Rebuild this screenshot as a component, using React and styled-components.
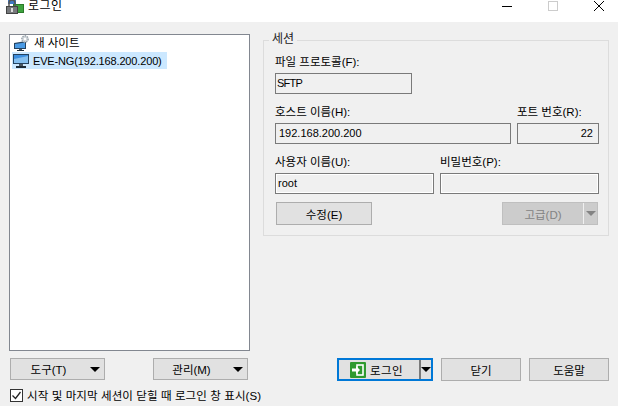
import styled, { createGlobalStyle } from "styled-components";

const GlobalStyle = createGlobalStyle`
  html, body {
    margin: 0;
    padding: 0;
    background: #f0f0f0;
  }
  body {
    font-family: "Liberation Sans", "Noto Sans CJK KR", sans-serif;
    font-size: 12px;
    color: #000;
  }
`;

const Window = styled.div`
  width: 618px;
  height: 406px;
  overflow: hidden;
  display: flex;
  flex-direction: column;
`;

const TitleBar = styled.div`
  height: 22px;
  background: #fff;
  display: flex;
  align-items: flex-start;
  flex: none;
  padding-left: 6px;
`;

const TitleIcon = styled.div`
  display: flex;
  flex: none;
`;

const TitleText = styled.span`
  margin-left: 4px;
  font-size: 12px;
  line-height: 13px;
  letter-spacing: 0.5px;
`;

const Controls = styled.div`
  margin-left: auto;
  margin-right: -4px;
  display: flex;
`;

const ControlButton = styled.div`
  width: 46px;
  height: 12px;
  display: flex;
  align-items: center;
  justify-content: center;
`;

const Main = styled.div`
  flex: 1;
  display: grid;
  grid-template-columns: 241px 346px;
  grid-template-rows: 318px 33px auto;
  column-gap: 13px;
  padding: 11px 0 0 9px;
`;

const SiteList = styled.div`
  margin-top: 1px;
  background: #fff;
  border: 1px solid #828790;
  box-sizing: border-box;
  padding: 0 0 0 2px;
`;

const SiteRow = styled.div`
  display: flex;
  align-items: center;
  gap: ${({ $selected }) => ($selected ? "4px" : "5px")};
  width: ${({ $selected }) => ($selected ? "155px" : "auto")};
  height: 17px;
  padding-left: 1px;
  box-sizing: border-box;
  background: ${({ $selected }) => ($selected ? "#cce8ff" : "transparent")};
  font-size: ${({ $selected }) => ($selected ? "11px" : "11.5px")};
  letter-spacing: ${({ $selected }) => ($selected ? "-0.15px" : "0")};
  white-space: nowrap;
`;

const SiteName = styled.span`
  padding-bottom: ${({ $raised }) => ($raised ? "3px" : "0")};
`;

const MonitorSvg = styled.svg`
  flex: none;
`;

const Session = styled.fieldset`
  margin: 0;
  min-width: 0;
  height: 203px;
  padding: 7px 9px 10px 11px;
  box-sizing: border-box;
  border: 1px solid #dcdcdc;
`;

const Legend = styled.legend`
  margin-left: -6px;
  padding: 0 3px;
  height: 14px;
  line-height: 12px;
  color: #222;
`;

const FieldRow = styled.div`
  display: grid;
  grid-template-columns: ${({ $columns }) => $columns};
  column-gap: 6px;
  margin-bottom: 10px;
`;

const Field = styled.div`
  display: flex;
  flex-direction: column;
`;

const Label = styled.label`
  height: 16px;
  line-height: 16px;
  margin-bottom: 3px;
  font-size: 11.5px;
  white-space: nowrap;
`;

const Input = styled.div`
  height: 21px;
  box-sizing: border-box;
  border: 1px solid #7a7a7a;
  background: #f0f0f0;
  line-height: 19px;
  padding: 0 ${({ $right }) => ($right ? "5px" : "2px")} 0 ${({ $indent }) => $indent || "1px"};
  text-align: ${({ $right }) => ($right ? "right" : "left")};
  font-size: 11px;
  letter-spacing: ${({ $spacing }) => $spacing || "0"};
  box-shadow: ${({ $inset }) => ($inset ? "inset 0 0 0 1px #fff" : "none")};
`;

const ActionRow = styled.div`
  display: flex;
  justify-content: space-between;
  margin: -2px 1px 0;
`;

const Button = styled.button`
  width: ${({ $width }) => $width || "96px"};
  height: ${({ $height }) => $height || "23px"};
  box-sizing: border-box;
  border: 1px solid ${({ disabled }) => (disabled ? "#bfbfbf" : "#adadad")};
  background: ${({ disabled }) => (disabled ? "#cccccc" : "#e1e1e1")};
  color: ${({ disabled }) => (disabled ? "#838383" : "#000")};
  padding: 0;
  font: inherit;
  font-size: 11.5px;
  display: flex;
  align-items: center;
  justify-content: center;
`;

const LeftButtons = styled.div`
  display: flex;
  justify-content: space-between;
  align-items: flex-start;
  padding: 7px 2px 0 1px;
`;

const RightButtons = styled.div`
  display: flex;
  align-items: flex-start;
  gap: 8px;
  padding: 7px 0 0 74px;
`;

const ButtonLabel = styled.span`
  flex: 1;
  text-align: center;
`;

const Arrow = styled.span`
  width: 0;
  height: 0;
  border-left: 5px solid transparent;
  border-right: 5px solid transparent;
  border-top: 5px solid ${({ $color }) => $color || "#000"};
`;

const ArrowSlot = styled.span`
  width: ${({ $width }) => $width || "18px"};
  height: 100%;
  display: flex;
  align-items: center;
  justify-content: center;
  flex: none;
`;

const Split = styled.span`
  width: ${({ $width }) => $width || "1px"};
  height: 100%;
  background: ${({ $color }) => $color};
  flex: none;
`;

const LoginButton = styled(Button)`
  border: 2px solid #0078d7;
`;

const LoginLabel = styled.span`
  flex: 1;
  display: flex;
  align-items: center;
  gap: 4px;
  padding-left: 11px;
  letter-spacing: 0.4px;
`;

const CheckRow = styled.div`
  grid-column: 1 / span 2;
  display: flex;
  align-items: center;
  gap: 4px;
  padding: 0 0 0 1px;
  font-size: 11.5px;
  letter-spacing: 0.1px;
  white-space: nowrap;
`;

const CheckBox = styled.span`
  width: 13px;
  height: 13px;
  box-sizing: border-box;
  border: 1px solid #333;
  background: #fff;
  display: flex;
  flex: none;
`;

function SiteMonitor() {
  return (
    <MonitorSvg width="16" height="17" viewBox="0 0 16 17">
      <rect x="0" y="2" width="16" height="10" fill="#24425f" />
      <rect x="1" y="3" width="14" height="8" fill="#3d8fe0" />
      <path d="M1 7 L15 4 V11 H1 Z" fill="#86c0f0" />
      <rect x="6" y="12" width="4" height="2" fill="#4a5560" />
      <rect x="3" y="14" width="10" height="2" fill="#1e2a36" />
    </MonitorSvg>
  );
}

function NewSiteMonitor() {
  return (
    <MonitorSvg width="16" height="17" viewBox="0 0 16 17">
      <path d="M1 8 L13 6 V14 H1 Z" fill="#24425f" />
      <path d="M2 9 L12 7.5 V13 H2 Z" fill="#4a9ae4" />
      <rect x="6" y="14" width="3" height="1" fill="#4a5560" />
      <rect x="4" y="15" width="7" height="1" fill="#1e2a36" />
      <circle cx="12" cy="4" r="3.2" fill="#cfd5da" stroke="#9aa3aa" strokeWidth="1.4" strokeDasharray="1.4 1" />
      <circle cx="12" cy="4" r="1.2" fill="#fff" />
    </MonitorSvg>
  );
}

function TitleGlyph() {
  return (
    <svg width="18" height="14" viewBox="0 0 18 14">
      <rect x="7.5" y="4.5" width="10" height="8" fill="#3ea33e" stroke="#2a7a2a" />
      <rect x="2" y="0" width="8" height="4" fill="#3f78c4" />
      <path d="M3 6 V3 a3 3 0 0 1 6 0 V6" fill="none" stroke="#555" strokeWidth="1.5" />
      <rect x="0.5" y="6.5" width="11" height="7" fill="#77797c" stroke="#444" />
      <rect x="5" y="8" width="2" height="4" fill="#ddd" />
    </svg>
  );
}

function LoginIcon() {
  return (
    <svg width="16" height="16" viewBox="0 0 16 16">
      <rect x="0" y="0" width="16" height="16" rx="1" fill="#2f9a2f" />
      <rect x="7" y="3" width="6" height="10" fill="none" stroke="#fff" strokeWidth="1.6" />
      <path d="M2 6.5 H6 V4 L10 8 L6 12 V9.5 H2 Z" fill="#fff" />
    </svg>
  );
}

export default function App() {
  return (
    <>
      <GlobalStyle />
      <Window>
        <TitleBar>
          <TitleIcon>
            <TitleGlyph />
          </TitleIcon>
          <TitleText>로그인</TitleText>
          <Controls>
            <ControlButton>
              <svg width="10" height="10" viewBox="0 0 10 10">
                <path d="M0 5.5 H10" stroke="#000" />
              </svg>
            </ControlButton>
            <ControlButton>
              <svg width="10" height="10" viewBox="0 0 10 10">
                <rect x="0.5" y="0.5" width="9" height="9" fill="none" stroke="#ccc" />
              </svg>
            </ControlButton>
            <ControlButton>
              <svg width="10" height="10" viewBox="0 0 10 10">
                <path d="M0 0 L10 10 M10 0 L0 10" stroke="#000" />
              </svg>
            </ControlButton>
          </Controls>
        </TitleBar>

        <Main>
          <SiteList>
            <SiteRow>
              <NewSiteMonitor />
              <SiteName $raised>새 사이트</SiteName>
            </SiteRow>
            <SiteRow $selected>
              <SiteMonitor />
              <SiteName>EVE-NG(192.168.200.200)</SiteName>
            </SiteRow>
          </SiteList>

          <Session>
            <Legend>세션</Legend>
            <FieldRow $columns="137px">
              <Field>
                <Label>파일 프로토콜(F):</Label>
                <Input $spacing="-0.8px">SFTP</Input>
              </Field>
            </FieldRow>
            <FieldRow $columns="236px 82px">
              <Field>
                <Label>호스트 이름(H):</Label>
                <Input $indent="3px">192.168.200.200</Input>
              </Field>
              <Field>
                <Label>포트 번호(R):</Label>
                <Input $right>22</Input>
              </Field>
            </FieldRow>
            <FieldRow $columns="159px 159px">
              <Field>
                <Label>사용자 이름(U):</Label>
                <Input $inset $indent="2px">root</Input>
              </Field>
              <Field>
                <Label>비밀번호(P):</Label>
                <Input $inset />
              </Field>
            </FieldRow>
            <ActionRow>
              <Button>수정(E)</Button>
              <Button disabled>
                <ButtonLabel>고급(D)</ButtonLabel>
                <Split $color="#f0f0f0" />
                <ArrowSlot $width="13px">
                  <Arrow $color="#838383" />
                </ArrowSlot>
              </Button>
            </ActionRow>
          </Session>

          <LeftButtons>
            <Button $width="95px" $height="22px">
              <ButtonLabel>도구(T)</ButtonLabel>
              <ArrowSlot>
                <Arrow />
              </ArrowSlot>
            </Button>
            <Button $width="95px" $height="22px">
              <ButtonLabel>관리(M)</ButtonLabel>
              <ArrowSlot>
                <Arrow />
              </ArrowSlot>
            </Button>
          </LeftButtons>

          <RightButtons>
            <LoginButton $width="96px">
              <LoginLabel>
                <LoginIcon />
                로그인
              </LoginLabel>
              <Split $color="#7a7a7a" $width="2px" />
              <ArrowSlot $width="10px">
                <Arrow />
              </ArrowSlot>
            </LoginButton>
            <Button $width="80px">닫기</Button>
            <Button $width="80px">도움말</Button>
          </RightButtons>

          <CheckRow>
            <CheckBox>
              <svg width="11" height="11" viewBox="0 0 11 11">
                <path d="M1.5 5.5 L4.5 8.5 L9.5 2" fill="none" stroke="#222" strokeWidth="1.3" />
              </svg>
            </CheckBox>
            시작 및 마지막 세션이 닫힐 때 로그인 창 표시(S)
          </CheckRow>
        </Main>
      </Window>
    </>
  );
}
